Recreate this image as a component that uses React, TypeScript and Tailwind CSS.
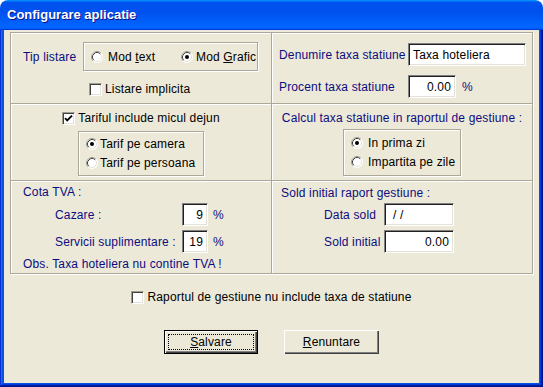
import React from 'react';

const etched = 'border border-[#aca899] shadow-[inset_1px_1px_0_#fff,1px_1px_0_#fff]';
const navy = 'text-[#0c0c80]';

const Radio: React.FC<{ checked?: boolean }> = ({ checked }) => (
  <svg width="12" height="12" viewBox="0 0 12 12" className="shrink-0">
    <circle cx="6" cy="6" r="5.5" fill="#fff" />
    <path d="M2.11 9.89A5.5 5.5 0 0 1 9.89 2.11" fill="none" stroke="#9d9d92" />
    <path d="M9.89 2.11A5.5 5.5 0 0 1 2.11 9.89" fill="none" stroke="#fff" />
    <path d="M2.82 9.18A4.5 4.5 0 0 1 9.18 2.82" fill="none" stroke="#404040" />
    <path d="M9.18 2.82A4.5 4.5 0 0 1 2.82 9.18" fill="none" stroke="#e4e1d6" />
    {checked && <circle cx="6" cy="6" r="2" fill="#000" />}
  </svg>
);

const Check: React.FC<{ checked?: boolean }> = ({ checked }) => (
  <div className="w-[13px] h-[13px] shrink-0 bg-white border border-t-[#9d9d92] border-l-[#9d9d92] border-b-white border-r-white shadow-[inset_1px_1px_0_#404040,inset_-1px_-1px_0_#e4e1d6] flex items-center justify-center">
    {checked && (
      <svg width="9" height="9" viewBox="0 0 9 9">
        <path d="M1 4.2l2.2 2.2L8 1.6" fill="none" stroke="#000" strokeWidth="1.8" />
      </svg>
    )}
  </div>
);

const Field: React.FC<{ className: string; children?: React.ReactNode }> = ({ className, children }) => (
  <div
    className={`h-[23px] bg-white border border-t-[#808080] border-l-[#808080] border-b-white border-r-white shadow-[inset_1px_1px_0_#202020,inset_-1px_-1px_0_#e4e1d6] flex items-center text-black ${className}`}
  >
    {children}
  </div>
);

export default function App() {
  return (
    <div className="w-[543px] h-[387px] flex flex-col bg-white font-['Liberation_Sans',Arial,sans-serif] text-[12px] leading-[14px] tracking-[0.15px] text-black select-none">
      {/* title bar */}
      <div className="h-[30px] shrink-0 rounded-t-[8px] bg-[linear-gradient(180deg,#0997ff,#0053ee_8%,#0050ee_40%,#06f_88%,#06f_93%,#005bff_95%,#003dd7_96%,#003dd7)] flex items-center pl-[7px] pb-[1px]">
        <span className="text-white font-bold text-[13px] tracking-normal [text-shadow:1px_1px_#0f1089]">Configurare aplicatie</span>
      </div>

      <div className="flex-1 flex px-[4px] pb-[4px] bg-[#0a50e4] shadow-[inset_-1px_-1px_#00138c,inset_1px_0_#0831d9,inset_-2px_-2px_#001ea0,inset_2px_0_#166aee,inset_-3px_-3px_#003bda,inset_3px_0_#0855dd]">
        <div className="flex-1 bg-[#ece9d8] flex flex-col items-center pt-[2px]">
          {/* main group */}
          <div className={`w-[523px] h-[242px] self-start ml-[6px] grid grid-cols-[261px_260px] grid-rows-[71px_77px_92px] ${etched}`}>
            {/* top left */}
            <div className="border-r border-b border-[#aca899] shadow-[1px_1px_0_#fff] flex flex-col">
              <div className="flex items-center mt-[9px] pl-[12px]">
                <span className={`w-[60px] ${navy}`}>Tip listare</span>
                <div className={`w-[175px] h-[29px] flex items-center pl-[7px] ${etched}`}>
                  <div className="w-[90px] flex items-center gap-[5px]">
                    <Radio />
                    <span>
                      Mod <span className="underline">t</span>ext
                    </span>
                  </div>
                  <div className="flex items-center gap-[3px]">
                    <Radio checked />
                    <span>
                      Mod <span className="underline">G</span>rafic
                    </span>
                  </div>
                </div>
              </div>
              <div className="flex items-center gap-[3px] mt-[11px] pl-[78px]">
                <Check />
                <span>Listare implicita</span>
              </div>
            </div>

            {/* top right */}
            <div className="border-b border-[#aca899] shadow-[0_1px_0_#fff] flex flex-col pl-[7px]">
              <div className="flex items-center mt-[10px]">
                <span className={`w-[129px] ${navy}`}>Denumire taxa statiune</span>
                <Field className="w-[118px] pl-[4px]">Taxa hoteliera</Field>
              </div>
              <div className="flex items-center mt-[9px]">
                <span className={`w-[129px] ${navy}`}>Procent taxa statiune</span>
                <Field className="w-[48px] justify-end pr-[4px]">0.00</Field>
                <span className={`ml-[6px] ${navy}`}>%</span>
              </div>
            </div>

            {/* middle left */}
            <div className="border-r border-b border-[#aca899] shadow-[1px_1px_0_#fff] flex flex-col items-center">
              <div className="flex items-center gap-[3px] mt-[7px] h-[14px]">
                <Check checked />
                <span>Tariful include micul dejun</span>
              </div>
              <div className={`w-[126px] h-[45px] mt-[6px] pt-[2px] pl-[7px] flex flex-col ${etched}`}>
                <div className="h-[19px] flex items-center gap-[2px]">
                  <Radio checked />
                  <span>Tarif pe camera</span>
                </div>
                <div className="h-[19px] flex items-center gap-[2px]">
                  <Radio />
                  <span>Tarif pe persoana</span>
                </div>
              </div>
            </div>

            {/* middle right */}
            <div className="border-b border-[#aca899] shadow-[0_1px_0_#fff] flex flex-col items-center">
              <div className={`mt-[7px] h-[14px] ${navy}`}>Calcul taxa statiune in raportul de gestiune :</div>
              <div className={`w-[118px] h-[47px] mt-[4px] pt-[3px] pl-[7px] flex flex-col ${etched}`}>
                <div className="h-[19px] flex items-center gap-[5px]">
                  <Radio checked />
                  <span>In prima zi</span>
                </div>
                <div className="h-[19px] flex items-center gap-[5px]">
                  <Radio />
                  <span>Impartita pe zile</span>
                </div>
              </div>
            </div>

            {/* bottom left */}
            <div className="border-r border-[#aca899] shadow-[1px_0_0_#fff] flex flex-col pl-[12px]">
              <div className={`mt-[4px] h-[14px] ${navy}`}>Cota TVA :</div>
              <div className="flex items-center mt-[4px] ml-[32px]">
                <span className={`w-[127px] ${navy}`}>Cazare :</span>
                <Field className="w-[26px] justify-end pr-[4px]">9</Field>
                <span className={`ml-[5px] ${navy}`}>%</span>
              </div>
              <div className="flex items-center mt-[4px] ml-[32px]">
                <span className={`w-[127px] ${navy}`}>Servicii suplimentare :</span>
                <Field className="w-[26px] justify-end pr-[4px]">19</Field>
                <span className={`ml-[5px] ${navy}`}>%</span>
              </div>
              <div className={`mt-[4px] h-[14px] ${navy}`}>Obs. Taxa hoteliera nu contine TVA !</div>
            </div>

            {/* bottom right */}
            <div className="flex flex-col pl-[9px]">
              <div className={`mt-[5px] h-[14px] ${navy}`}>Sold initial raport gestiune :</div>
              <div className="flex items-center mt-[3px] ml-[43px]">
                <span className={`w-[60px] ${navy}`}>Data sold</span>
                <Field className="w-[70px] pl-[8px]">/ /</Field>
              </div>
              <div className="flex items-center mt-[4px] ml-[43px]">
                <span className={`w-[60px] ${navy}`}>Sold initial</span>
                <Field className="w-[70px] justify-end pr-[4px]">0.00</Field>
              </div>
            </div>
          </div>

          {/* bottom checkbox */}
          <div className="flex items-center gap-[3px] mt-[16px] h-[14px]">
            <Check />
            <span>Raportul de gestiune nu include taxa de statiune</span>
          </div>

          {/* buttons */}
          <div className="flex gap-[26px] mt-[26px]">
            <button className="w-[94px] h-[24px] bg-[#ece9d8] border border-black shadow-[inset_1px_1px_0_#fff,inset_-1px_-1px_0_#404040,inset_-2px_-2px_0_#808080] p-[3px]">
              <div className="w-full h-full border border-dotted border-black flex items-center justify-center">
                <span>
                  <span className="underline">S</span>alvare
                </span>
              </div>
            </button>
            <button className="w-[95px] h-[24px] bg-[#ece9d8] shadow-[inset_1px_1px_0_#fff,inset_-1px_-1px_0_#404040,inset_-2px_-2px_0_#808080] flex items-center justify-center">
              <span>
                <span className="underline">R</span>enuntare
              </span>
            </button>
          </div>
        </div>
      </div>
    </div>
  );
}
